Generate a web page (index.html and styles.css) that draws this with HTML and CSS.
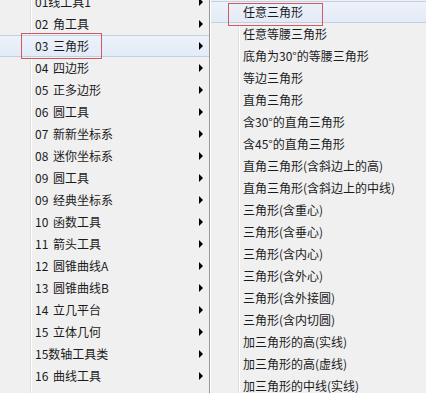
FILE: index.html
```html
<!DOCTYPE html>
<html lang="zh-CN">
<head>
    <meta charset="UTF-8">
    <meta name="viewport" content="width=device-width, initial-scale=1.0">
    <title>三角形菜单</title>
    <link rel="stylesheet" href="styles.css">
</head>
<body>
    <div class="menus">
        <ul class="menu tools-menu">
            <li class="item"><span>01线工具1</span><i class="arrow"></i></li>
            <li class="item"><span>02 角工具</span><i class="arrow"></i></li>
            <li class="item active"><span>03 三角形</span><i class="arrow"></i><b class="mark tools-mark"></b></li>
            <li class="item"><span>04 四边形</span><i class="arrow"></i></li>
            <li class="item"><span>05 正多边形</span><i class="arrow"></i></li>
            <li class="item"><span>06 圆工具</span><i class="arrow"></i></li>
            <li class="item"><span>07 新新坐标系</span><i class="arrow"></i></li>
            <li class="item"><span>08 迷你坐标系</span><i class="arrow"></i></li>
            <li class="item"><span>09 圆工具</span><i class="arrow"></i></li>
            <li class="item"><span>09 经典坐标系</span><i class="arrow"></i></li>
            <li class="item"><span>10 函数工具</span><i class="arrow"></i></li>
            <li class="item"><span>11 箭头工具</span><i class="arrow"></i></li>
            <li class="item"><span>12 圆锥曲线A</span><i class="arrow"></i></li>
            <li class="item"><span>13 圆锥曲线B</span><i class="arrow"></i></li>
            <li class="item"><span>14 立几平台</span><i class="arrow"></i></li>
            <li class="item"><span>15 立体几何</span><i class="arrow"></i></li>
            <li class="item"><span>15数轴工具类</span><i class="arrow"></i></li>
            <li class="item"><span>16 曲线工具</span><i class="arrow"></i></li>
        </ul>
        <ul class="menu shapes-menu">
            <li class="item active"><span>任意三角形</span><b class="mark shapes-mark"></b></li>
            <li class="item"><span>任意等腰三角形</span></li>
            <li class="item"><span>底角为30°的等腰三角形</span></li>
            <li class="item"><span>等边三角形</span></li>
            <li class="item"><span>直角三角形</span></li>
            <li class="item"><span>含30°的直角三角形</span></li>
            <li class="item"><span>含45°的直角三角形</span></li>
            <li class="item"><span>直角三角形(含斜边上的高)</span></li>
            <li class="item"><span>直角三角形(含斜边上的中线)</span></li>
            <li class="item"><span>三角形(含重心)</span></li>
            <li class="item"><span>三角形(含垂心)</span></li>
            <li class="item"><span>三角形(含内心)</span></li>
            <li class="item"><span>三角形(含外心)</span></li>
            <li class="item"><span>三角形(含外接圆)</span></li>
            <li class="item"><span>三角形(含内切圆)</span></li>
            <li class="item"><span>加三角形的高(实线)</span></li>
            <li class="item"><span>加三角形的高(虚线)</span></li>
            <li class="item"><span>加三角形的中线(实线)</span></li>
        </ul>
    </div>
</body>
</html>
```

FILE: styles.css
```css
body {
    margin: 0;
    padding: 0;
    background-color: #f0f0f0;
    font-family: "Noto Sans CJK SC", "Microsoft YaHei", sans-serif;
    font-size: 12px;
    color: #1b1b1b;
    overflow: hidden;
    height: 393px;
}

.menus {
    display: flex;
    height: 393px;
}

.menu {
    list-style: none;
    margin: 0;
    padding: 0;
    background-color: #f0f0f0;
}

.tools-menu {
    width: 209px;
    margin-top: -9px;
    border-right: 1px solid #979797;
    word-spacing: 2px;
    background-image: linear-gradient(to right, transparent 30px, #e0e0e0 30px, #e0e0e0 31px, #ffffff 31px, #ffffff 32px, transparent 32px);
}

.shapes-menu {
    flex: 1;
    padding-top: 1px;
    border-left: 1px solid #ffffff;
    background-image: linear-gradient(to right, transparent 27px, #e0e0e0 27px, #e0e0e0 28px, #ffffff 28px, #ffffff 29px, transparent 29px);
}

.item {
    position: relative;
    height: 22px;
    display: flex;
    align-items: center;
    box-sizing: border-box;
    white-space: nowrap;
}

.tools-menu .item {
    padding-left: 35px;
    padding-right: 6px;
}

.shapes-menu .item {
    padding-left: 32px;
}

.item span {
    flex: 1;
    line-height: 22px;
}

.item.active {
    background: linear-gradient(#edf2fa, #e3ebf7);
    border-top: 1px solid #c3d0e4;
    border-bottom: 1px solid #c3d0e4;
}

.arrow {
    width: 0;
    height: 0;
    border-top: 4px solid transparent;
    border-bottom: 4px solid transparent;
    border-left: 4px solid #000;
}

.mark {
    position: absolute;
    border: 1px solid #d05a5f;
    pointer-events: none;
}

.tools-mark {
    left: 21px;
    top: -3px;
    width: 79px;
    height: 24px;
}

.shapes-mark {
    left: 17px;
    top: 1px;
    width: 93px;
    height: 21px;
}
```
